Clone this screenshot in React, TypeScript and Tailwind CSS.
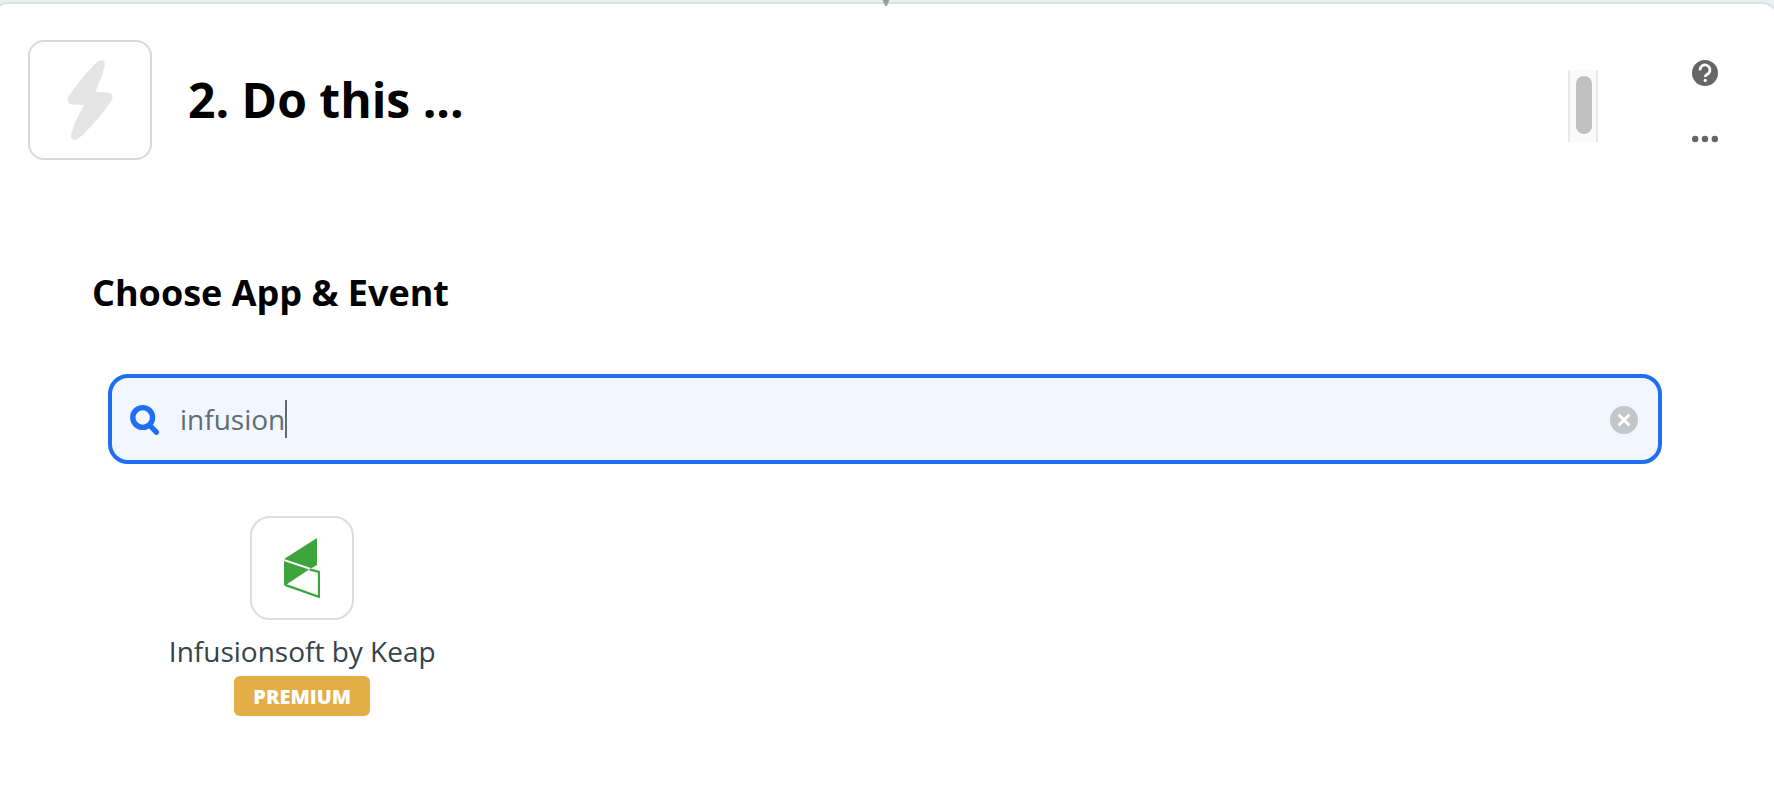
import React, { useState, useRef } from 'react';

const apps = [{ id: 'infusionsoft', name: 'Infusionsoft by Keap', premium: true }];

const BoltIcon = () => (
  <svg className="w-[46px] h-20" viewBox="0 0 46 80" fill="#e5e5e5" aria-hidden="true">
    <path d="M29.500 2.500C31.500 .5 34 -.2 36 .4C38.200 1.500 38 4.500 37.300 7.500C35.500 14.500 32.500 23 28.500 32L41 32.500C46 33 46.500 38 44 41.500C36 53 25 66 14 76.500C10 80 7 80.500 5.500 79.500C3.500 78.500 3.700 76 4.500 73C7 64 12 54 17 45L5 44.500C.5 43.500 -.5 39.500 1.500 36.500C8 27 18 14 29.500 2.500Z" />
  </svg>
);

const SearchIcon = () => (
  <svg className="w-[30px] h-[32px] shrink-0" viewBox="0 0 30 32" fill="none" stroke="#1f6ff2" aria-hidden="true">
    <circle cx="12.700" cy="14.500" r="9.900" strokeWidth="5.400" />
    <path d="M20 22.500L26.300 29.200" strokeWidth="5.400" strokeLinecap="round" />
  </svg>
);

const KeapLogo = () => (
  <svg className="w-9 h-[60px]" viewBox="0 0 36 60" aria-hidden="true">
    <path d="M33 0V27L27.500 30.300L0 21Z" fill="#3ea53d" />
    <path d="M0 23L25 31.500L1 47.500L0 47Z" fill="#3ea53d" />
    <path d="M25.500 31.300L35 34V58.800L1 46.800" fill="none" stroke="#3ea53d" strokeWidth="2.300" />
  </svg>
);

const App: React.FC = () => {
  const [query, setQuery] = useState('infusion');
  const inputRef = useRef<HTMLInputElement>(null);

  const results = apps.filter(app => app.name.toLowerCase().includes(query.toLowerCase()));

  return (
    <div className="min-h-screen flex flex-col overflow-hidden bg-[#ecf0f1] pt-0.5 font-['Open_Sans','Noto_Sans',sans-serif]">
      <main className="relative flex-1 -ml-2 -mr-1 border-2 border-b-0 border-[#d9e1e2] rounded-t-2xl bg-white">
        {/* Connector from the previous step */}
        <svg className="absolute -top-1 left-1/2 -ml-[3px] w-2 h-2" viewBox="0 0 8 8" fill="#95a0a2" aria-hidden="true">
          <path d="M0.500 0H7.500L4.800 6H3.200Z" />
        </svg>

        {/* Step header */}
        <header className="flex items-center pt-9 pl-[34px] pr-[58px]">
          <div className="w-[124px] h-[120px] shrink-0 flex items-center justify-center border-2 border-[#d8d8d8] rounded-2xl">
            <BoltIcon />
          </div>
          <div className="flex-1 flex items-center ml-9">
            <h1 className="flex-1 text-5xl leading-[72px] font-bold text-black">2. Do this ...</h1>
            <div className="w-[30px] mt-3 h-[72px] px-1.5 py-1.5 border-x-2 border-[#e8e8e8] bg-[#fafafa]">
              <div className="w-4 h-[58px] rounded-full bg-[#c1c1c1]" />
            </div>
          </div>
          <div className="flex flex-col items-center ml-[94px] mt-3 gap-10">
            <button type="button" aria-label="Help">
              <svg className="block w-[26px] h-[26px]" viewBox="0 0 26 26" fill="none">
                <circle cx="13" cy="13" r="13" fill="#666" />
                <path d="M8 10.300A5 5 0 1 1 16.500 13.500C14.500 14.800 13.200 15 13.200 17" stroke="#fff" strokeWidth="2.700" />
                <circle cx="13.200" cy="20.400" r="1.600" fill="#fff" />
              </svg>
            </button>
            <button type="button" aria-label="More options">
              <svg className="block w-[26px] h-[26px]" viewBox="0 0 26 26" fill="#666">
                <circle cx="3.200" cy="13" r="3.200" />
                <circle cx="13" cy="13" r="3.200" />
                <circle cx="22.800" cy="13" r="3.200" />
              </svg>
            </button>
          </div>
        </header>

        {/* App picker */}
        <section className="pt-[106px] pl-[98px] pr-[114px]">
          <h2 className="text-4xl leading-[54px] font-bold text-black">Choose App &amp; Event</h2>

          <div className="mt-[54px] ml-4 h-[90px] flex items-center pl-[18px] pr-5 border-4 border-[#1f6ff2] rounded-[20px] bg-[#f2f7ff]">
            <SearchIcon />
            <label className="flex-1 flex items-center ml-5 cursor-text">
              <input
                ref={inputRef}
                type="text"
                aria-label="Search apps"
                value={query}
                onChange={e => setQuery(e.target.value)}
                className="field-sizing-content text-[28px] leading-[42px] text-[#5f6d73] bg-transparent outline-none caret-transparent"
              />
              <span className="w-0.5 h-[38px] bg-[#5f6d73]" />
            </label>
            <button
              type="button"
              aria-label="Clear search"
              className="pt-0.5"
              onClick={() => {
                setQuery('');
                inputRef.current?.focus();
              }}
            >
              <svg className="block w-7 h-7" viewBox="0 0 28 28">
                <circle cx="14" cy="14" r="14" fill="#c5c6c7" />
                <path d="M9.500 9.500L18.500 18.500M18.500 9.500L9.500 18.500" stroke="#fff" strokeWidth="3" strokeLinecap="round" />
              </svg>
            </button>
          </div>

          <div className="grid grid-cols-4 ml-4 mt-[52px]">
            {results.map(app => (
              <button key={app.id} type="button" className="flex flex-col items-center">
                <span className="w-[104px] h-[104px] flex items-center justify-center border-2 border-[#d9dee1] rounded-[20px]">
                  <KeapLogo />
                </span>
                <span className="mt-2.5 text-[28px] leading-[42px] text-[#35434a]">{app.name}</span>
                {app.premium && (
                  <span className="mt-1 h-10 px-[19px] rounded-md bg-[#e3ae45] text-xl leading-[42px] font-extrabold text-white">
                    PREMIUM
                  </span>
                )}
              </button>
            ))}
          </div>
        </section>
      </main>
    </div>
  );
};

export default App;
